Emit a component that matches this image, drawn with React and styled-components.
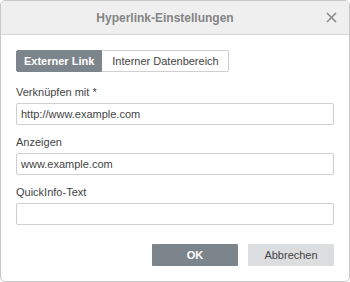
import React from 'react'
import styled, { createGlobalStyle } from 'styled-components'

const Global = createGlobalStyle`
    html, body {
        margin: 0;
        padding: 0;
        background: #fff;
    }
    * {
        box-sizing: border-box;
    }
`

const Dialog = styled.div`
    width: 350px;
    height: 282px;
    border: 1px solid #c8c8c8;
    border-radius: 5px;
    overflow: hidden;
    display: flex;
    flex-direction: column;
    font-family: "Liberation Sans", Arial, sans-serif;
    font-size: 11px;
    color: #444;
`

const Header = styled.div`
    height: 34px;
    flex-shrink: 0;
    background: #efefef;
    border-bottom: 1px solid #d6d6d6;
    display: flex;
    align-items: center;
    justify-content: center;
    padding-right: 20px;
    position: relative;

    h1 {
        margin: 0;
        font-size: 12px;
        font-weight: bold;
        color: #848484;
    }
`

const Close = styled.button`
    position: absolute;
    right: 11px;
    top: 10px;
    width: 13px;
    height: 13px;
    padding: 0;
    border: none;
    background: none;
    display: flex;
    align-items: center;
    justify-content: center;
    cursor: pointer;
`

const Body = styled.div`
    flex: 1;
    padding: 15px 15px 0 15px;
    display: flex;
    flex-direction: column;
`

const Tabs = styled.div`
    display: flex;
    margin-bottom: 12px;
`

const Tab = styled.button`
    height: 22px;
    padding: ${p => (p.active ? '0 7px' : '0 9px 0 10px')};
    font-family: inherit;
    font-size: 11px;
    font-weight: ${p => (p.active ? 'bold' : 'normal')};
    color: ${p => (p.active ? '#fff' : '#444')};
    background: ${p => (p.active ? '#7d858c' : '#fff')};
    border: 1px solid ${p => (p.active ? '#7d858c' : '#cfcfcf')};
    border-left-width: ${p => (p.active ? '1px' : '0')};
    border-radius: ${p => (p.active ? '2px 0 0 2px' : '0 2px 2px 0')};
`

const Field = styled.div`
    display: flex;
    flex-direction: column;
    margin-bottom: 9px;

    label {
        font-size: 11px;
        line-height: 16px;
        margin-bottom: 3px;
        color: #444;
    }
`

const Input = styled.input`
    height: 22px;
    width: 318px;
    border: 1px solid #cfcfcf;
    border-radius: 2px;
    padding: 0 4px;
    font-family: inherit;
    font-size: 11px;
    color: #444;
    outline: none;
`

const Footer = styled.div`
    display: flex;
    justify-content: flex-end;
    gap: 10px;
    margin-top: 10px;
    width: 318px;
`

const Button = styled.button`
    width: 86px;
    height: 22px;
    border: none;
    border-radius: 1px;
    font-family: inherit;
    font-size: 11px;
    font-weight: ${p => (p.primary ? 'bold' : 'normal')};
    color: ${p => (p.primary ? '#fff' : '#444')};
    background: ${p => (p.primary ? '#7d858c' : '#dcdddf')};
`

const App = () => {
    return (
        <>
            <Global />
            <Dialog>
                <Header>
                    <h1>Hyperlink-Einstellungen</h1>
                    <Close>
                        <svg width="11" height="11" viewBox="0 0 11 11">
                            <path d="M1 1L10 10M10 1L1 10" stroke="#8a8a8a" strokeWidth="1.5" />
                        </svg>
                    </Close>
                </Header>
                <Body>
                    <Tabs>
                        <Tab active>Externer Link</Tab>
                        <Tab>Interner Datenbereich</Tab>
                    </Tabs>
                    <Field>
                        <label>Verknüpfen mit *</label>
                        <Input defaultValue="http://www.example.com" />
                    </Field>
                    <Field>
                        <label>Anzeigen</label>
                        <Input defaultValue="www.example.com" />
                    </Field>
                    <Field>
                        <label>QuickInfo-Text</label>
                        <Input defaultValue="" />
                    </Field>
                    <Footer>
                        <Button primary>OK</Button>
                        <Button>Abbrechen</Button>
                    </Footer>
                </Body>
            </Dialog>
        </>
    )
}

export default App
